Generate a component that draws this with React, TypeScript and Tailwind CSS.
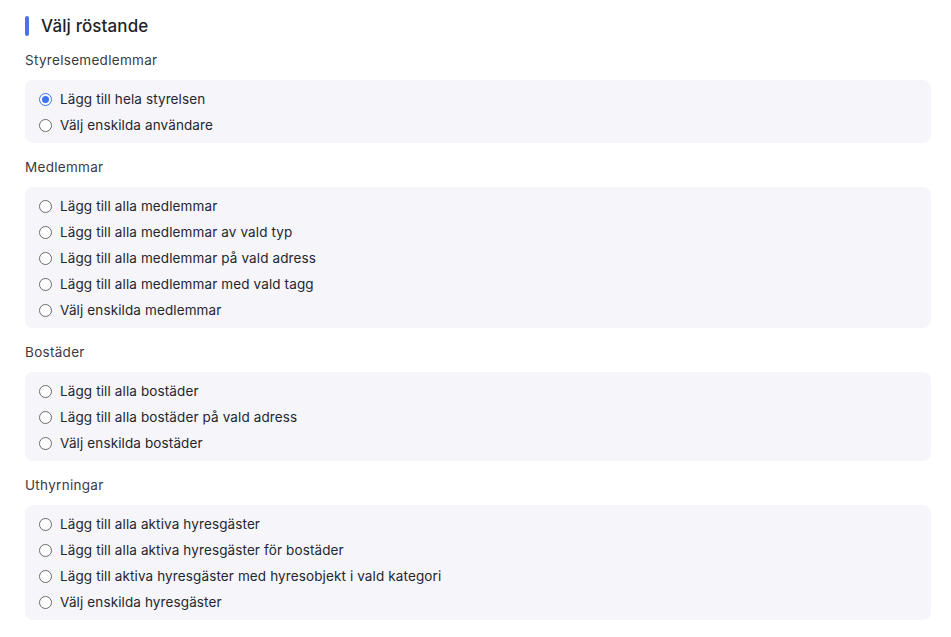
import React, { useState } from "react";

type Group = { title: string; options: string[] };

const groups: Group[] = [
  {
    title: "Styrelsemedlemmar",
    options: ["Lägg till hela styrelsen", "Välj enskilda användare"],
  },
  {
    title: "Medlemmar",
    options: [
      "Lägg till alla medlemmar",
      "Lägg till alla medlemmar av vald typ",
      "Lägg till alla medlemmar på vald adress",
      "Lägg till alla medlemmar med vald tagg",
      "Välj enskilda medlemmar",
    ],
  },
  {
    title: "Bostäder",
    options: [
      "Lägg till alla bostäder",
      "Lägg till alla bostäder på vald adress",
      "Välj enskilda bostäder",
    ],
  },
  {
    title: "Uthyrningar",
    options: [
      "Lägg till alla aktiva hyresgäster",
      "Lägg till alla aktiva hyresgäster för bostäder",
      "Lägg till aktiva hyresgäster med hyresobjekt i vald kategori",
      "Välj enskilda hyresgäster",
    ],
  },
];

function Radio({ checked }: { checked: boolean }) {
  return checked ? (
    <span className="flex h-[13px] w-[13px] items-center justify-center rounded-full border-[1.5px] border-[#3b74f0] bg-white">
      <span className="h-[7px] w-[7px] rounded-full bg-[#3b74f0]" />
    </span>
  ) : (
    <span className="h-[13px] w-[13px] rounded-full border border-[#6b6b6b] bg-white" />
  );
}

export default function App() {
  const [selected, setSelected] = useState("Styrelsemedlemmar-0");

  return (
    <div
      className="min-h-[637px] bg-white pl-[25px] pr-[20px] pt-[16px] text-[#2b2b33]"
      style={{ fontFamily: "Inter, 'Noto Sans', sans-serif" }}
    >
      <div className="flex h-[20px] items-center gap-[12px]">
        <span className="h-[20px] w-[4px] rounded-[2px] bg-[#4a73ea]" />
        <h2 className="text-[17px] font-medium leading-[20px] tracking-[0.1px] text-[#1f1f29]">
          Välj röstande
        </h2>
      </div>

      <div className="mt-[14px] flex flex-col">
        {groups.map((g, gi) => (
          <section key={g.title} className={gi === 0 ? "" : "mt-[14px]"}>
            <div className="flex h-[20px] items-center text-[13.5px] tracking-[0.3px] text-[#3a3a44]">
              {g.title}
            </div>
            <div className="mt-[10px] rounded-[8px] bg-[#f5f5fa] pb-[5px] pt-[6px]">
              {g.options.map((o, i) => {
                const id = `${g.title}-${i}`;
                return (
                  <label
                    key={id}
                    className="flex h-[26px] cursor-pointer items-center gap-[8px] pl-[14px] text-[13.5px] tracking-[0.12px] text-[#26262e]"
                    onClick={() => setSelected(id)}
                  >
                    <Radio checked={selected === id} />
                    <span>{o}</span>
                  </label>
                );
              })}
            </div>
          </section>
        ))}
      </div>
    </div>
  );
}
